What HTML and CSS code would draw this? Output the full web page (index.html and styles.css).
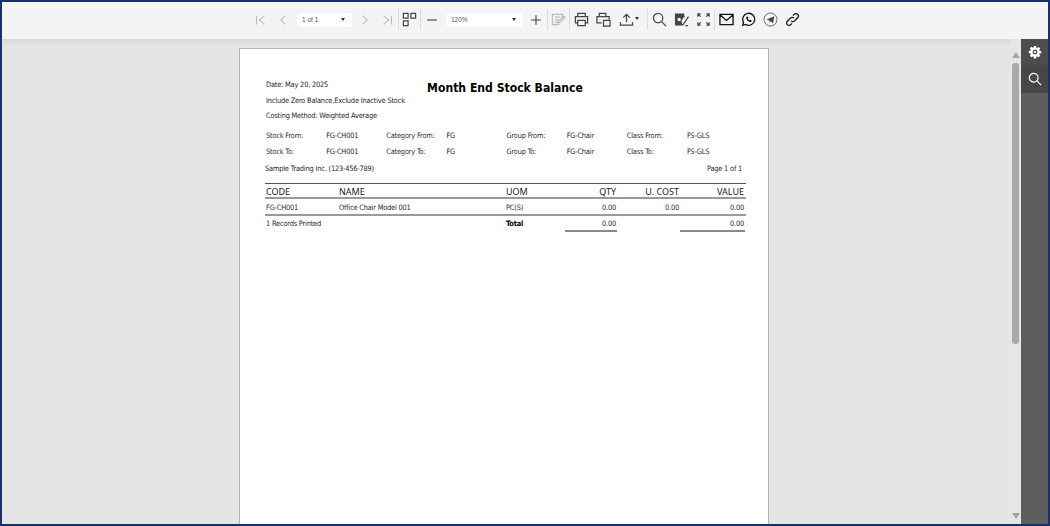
FILE: index.html
```html
<!DOCTYPE html>
<html lang="en">
<head>
<meta charset="utf-8">
<title>Month End Stock Balance</title>
<link rel="stylesheet" href="styles.css">
</head>
<body>
<div class="app">
  <header class="toolbar">
    <div class="group group-nav">
      <button class="btn off"><svg viewBox="0 0 16 16"><path d="M3 3v10M12 3L6 8l6 5"/></svg></button>
      <button class="btn off"><svg viewBox="0 0 16 16"><path d="M10.500 3L5.500 8l5 5"/></svg></button>
      <div class="select select-page"><span>1 of 1</span><i class="caret"></i></div>
      <button class="btn off"><svg viewBox="0 0 16 16"><path d="M5.500 3l5 5-5 5"/></svg></button>
      <button class="btn off"><svg viewBox="0 0 16 16"><path d="M13 3v10M4 3l6 5-6 5"/></svg></button>
    </div>
    <div class="group">
      <button class="btn narrow"><svg viewBox="0 0 16 16" class="big"><path d="M1.500 1.500h5v5h-5zM9.500 1.500h5v5h-5zM1.500 9.500h5v5h-5z"/></svg></button>
    </div>
    <div class="group group-zoom">
      <button class="btn"><svg viewBox="0 0 16 16"><path d="M2.500 8h11"/></svg></button>
      <div class="select select-zoom"><span>120%</span><i class="caret"></i></div>
      <button class="btn"><svg viewBox="0 0 16 16"><path d="M2.500 8h11M8 2.500v11"/></svg></button>
    </div>
    <div class="group">
      <button class="btn narrow off"><svg viewBox="0 0 16 16" class="big"><path d="M12 5V2.500H1.500v11H9M4 5.500h6M4 8.500h4M4 11h3M15 5.500L9.500 11l-2 1 .8-2.200L13.800 4.300z"/></svg></button>
    </div>
    <div class="group">
      <button class="btn"><svg viewBox="0 0 16 16" class="big"><path d="M4 5V1.500h8V5M4 11.500H1.500V5h13v6.500H12M4 9h8v5.500H4z"/></svg></button>
      <button class="btn"><svg viewBox="0 0 16 16" class="big"><path d="M3.500 5V1.500h7V5M6 11.500H1V5h13v3M8 9h7v6H8z"/></svg></button>
      <button class="btn wide"><svg viewBox="0 0 16 16" class="big"><path d="M8 11V2.500M4.500 6L8 2.500 11.500 6M1.500 11v3h13v-3"/></svg><i class="caret small"></i></button>
    </div>
    <div class="group">
      <button class="btn"><svg viewBox="0 0 16 16" class="big"><circle cx="6.500" cy="6.500" r="5"/><path d="M10.200 10.200L15 15"/></svg></button>
      <button class="btn"><svg viewBox="0 0 16 16" class="big"><path class="fill" d="M1 1.500h10v3l-3 5 1 5H1z"/><circle class="punch" cx="5.500" cy="8" r="1.800"/><path d="M15.500 5L10 13l-1.500 1"/><path d="M11 4.500v1M12 14.500h3"/></svg></button>
      <button class="btn"><svg viewBox="0 0 16 16" class="big"><path d="M2 5V2h3M2 2l3 3M11 2h3v3M14 2l-3 3M2 11v3h3M2 14l3-3M14 11v3h-3M14 14l-3-3"/></svg></button>
    </div>
    <div class="group last">
      <button class="btn"><svg viewBox="0 0 16 16" class="big black"><path d="M1 2.500h14v11H1zM1 3l7 6 7-6"/></svg></button>
      <button class="btn"><svg viewBox="0 0 16 16" class="big black"><path d="M1.800 14.200l.9-3.200A6.400 6.400 0 1 1 5 13.300z"/><path class="thick" d="M5.600 5.200c-.5 2.800 2.600 5.800 5.200 5.300l.6-1.500-1.700-.8-.7.700c-.8-.3-1.500-1-1.800-1.800l.7-.7-.8-1.700z"/></svg></button>
      <button class="btn"><svg viewBox="0 0 16 16" class="big thin"><circle cx="8" cy="8" r="7"/><path class="fill" d="M3.800 8L12 4.500 10.800 12 8.300 9.800 7 11.200 6.800 9z"/></svg></button>
      <button class="btn"><svg viewBox="0 0 16 16" class="big black"><path d="M6.500 9.500a2.600 2.600 0 0 0 3.700 0l3.300-3.300a2.600 2.600 0 0 0-3.700-3.700L8.500 3.800M9.500 6.500a2.600 2.600 0 0 0-3.700 0L2.500 9.800a2.600 2.600 0 0 0 3.700 3.700l1.300-1.300"/></svg></button>
    </div>
  </header>

  <div class="workspace">
    <main class="viewer">
      <article class="page">
        <section class="head">
          <div class="meta">
            <div class="line">Date: May 20, 2025</div>
            <div class="line">Include Zero Balance,Exclude Inactive Stock</div>
            <div class="line">Costing Method: Weighted Average</div>
          </div>
          <h1 class="title">Month End Stock Balance</h1>
        </section>

        <section class="filters">
          <span>Stock From:</span><b>FG-CH001</b><span>Category From:</span><b>FG</b><span>Group From:</span><b>FG-Chair</b><span>Class From:</span><b>FS-GLS</b>
          <span>Stock To:</span><b>FG-CH001</b><span>Category To:</span><b>FG</b><span>Group To:</span><b>FG-Chair</b><span>Class To:</span><b>FS-GLS</b>
        </section>

        <div class="company">
          <span>Sample Trading Inc. (123-456-789)</span>
          <span>Page 1 of 1</span>
        </div>

        <section class="table">
          <div class="row row-head">
            <span>CODE</span><span>NAME</span><span>UOM</span><span class="num">QTY</span><span class="num">U. COST</span><span class="num">VALUE</span>
          </div>
          <div class="row row-body">
            <span class="code">FG-CH001</span><span>Office Chair Model 001</span><span class="code">PC(S)</span><span class="num blue">0.00</span><span class="num blue">0.00</span><span class="num blue">0.00</span>
          </div>
          <div class="row row-total">
            <span class="span2">1 Records Printed</span><strong>Total</strong><span class="num sum">0.00</span><span></span><span class="num sum">0.00</span>
          </div>
        </section>
      </article>
    </main>

    <div class="scrollbar">
      <i class="arrow up"></i>
      <div class="track"><div class="thumb"></div></div>
      <i class="arrow down"></i>
    </div>

    <aside class="sidebar">
      <button class="side-btn side-gear">
        <svg viewBox="0 0 16 16"><path class="gear" d="M6.800 1h2.400l.3 1.900 1.100.5 1.600-1.100 1.700 1.700-1.100 1.600.5 1.100 1.900.3v2.400l-1.900.3-.5 1.100 1.100 1.600-1.700 1.700-1.600-1.100-1.100.5-.3 1.900H6.800l-.3-1.900-1.100-.5-1.600 1.100-1.700-1.700 1.100-1.600-.5-1.100L.8 9.200V6.800l1.900-.3.500-1.100-1.100-1.600 1.700-1.700 1.600 1.100 1.100-.5z"/><circle class="gear-hole" cx="8" cy="8" r="2.800"/><circle class="gear-dot" cx="8" cy="8" r="1.300"/></svg>
      </button>
      <button class="side-btn side-search">
        <svg viewBox="0 0 16 16"><circle cx="6.500" cy="6.500" r="5"/><path d="M10.200 10.200L15 15"/></svg>
      </button>
    </aside>
  </div>
</div>
</body>
</html>
```
FILE: styles.css
```css
* { box-sizing: border-box; }
html, body { margin: 0; height: 100%; overflow: hidden; }
body { font-family: "DejaVu Sans Condensed", "DejaVu Sans", sans-serif; }

.app {
  height: 526px;
  width: 1050px;
  border: 2px solid #17306f;
  display: flex;
  flex-direction: column;
  background: #e5e5e5;
}

/* toolbar */
.toolbar {
  height: 37px;
  flex: none;
  background: #f4f4f4;
  display: flex;
  align-items: flex-start;
  padding: 7px 0 0 248px;
  position: relative;
  z-index: 1;
}
.group {
  display: flex;
  align-items: center;
  height: 21px;
  border-right: 1px solid #dcdcdc;
}
.group.last { border-right: 0; }
.btn {
  width: 22px;
  height: 21px;
  padding: 0;
  border: 0;
  background: none;
  display: flex;
  align-items: center;
  justify-content: center;
  position: relative;
}
.btn.narrow { width: 21px; }
.btn.wide { width: 33px; justify-content: flex-start; padding-left: 5px; }
.btn svg { width: 14px; height: 14px; fill: none; stroke: #444; stroke-width: 1.3; display: block; }
.btn svg.big { width: 15px; height: 15px; }
.btn svg.black { stroke: #111; stroke-width: 1.4; }
.btn svg.thin { stroke: #555; stroke-width: .9; }
.btn.off svg { stroke: #bdbdbd; }
.btn svg .fill { fill: #444; stroke: none; }
.btn svg .punch { fill: #f4f4f4; stroke: none; }
.btn svg .thick { fill: #111; stroke: none; }

.select {
  height: 14px;
  margin: 0 2px 0 3px;
  background: #fff;
  border-radius: 2px;
  box-shadow: 0 0 1px #d8d8d8;
  display: flex;
  align-items: center;
  justify-content: space-between;
  padding: 0 7px 0 5px;
  font: 6.500px/14px "Liberation Sans", sans-serif;
  color: #555;
}
.select-page { width: 55px; }
.select-zoom { width: 77px; }
.caret {
  width: 0;
  height: 0;
  border-left: 2.500px solid transparent;
  border-right: 2.500px solid transparent;
  border-top: 3px solid #333;
}
.caret.small { position: absolute; left: 21px; top: 8px; }

/* workspace */
.workspace { flex: 1; min-height: 0; display: flex; }
.viewer {
  flex: 1;
  min-width: 0;
  overflow: hidden;
  padding: 9px 0 0 237px;
  background: linear-gradient(#d9d9d9, #e5e5e5 8px);
}
.scrollbar {
  width: 11px;
  flex: none;
  background: #e6e6e6;
  display: flex;
  flex-direction: column;
  align-items: center;
  padding-top: 13px;
  padding-bottom: 5px;
}
.track { flex: 1; width: 100%; display: flex; justify-content: center; padding-top: 5px; }
.thumb { width: 7px; height: 281px; background: #a9a9a9; border-radius: 3px; }
.arrow { width: 0; height: 0; border-left: 4px solid transparent; border-right: 4px solid transparent; }
.arrow.up { border-bottom: 6px solid #a3a3a3; }
.arrow.down { border-top: 6px solid #a3a3a3; }
.sidebar { width: 27px; flex: none; background: #5e5e5e; display: flex; flex-direction: column; }
.side-btn { height: 26px; padding: 0; border: 0; display: flex; align-items: center; justify-content: center; }
.side-gear { background: #4d4d4d; }
.side-search { background: #474747; height: 28px; }
.side-btn svg { width: 14px; height: 14px; fill: none; stroke: #fff; stroke-width: 1.400; }
.side-btn svg .gear { fill: #fff; stroke: none; }
.side-btn svg .gear-hole { fill: #4d4d4d; stroke: none; }
.side-btn svg .gear-dot { fill: #fff; stroke: none; }

/* report page */
.page {
  width: 530px;
  height: 520px;
  background: #fff;
  border: 1px solid #b4b4b4;
  padding: 28px 23px 0 25px;
  font-size: 7.400px;
  letter-spacing: -.2px;
  color: #2b2724;
}
.head { display: grid; }
.meta, .title { grid-area: 1 / 1; }
.line { height: 15.500px; line-height: 15.500px; padding-left: 1px; }
.title {
  margin: 3px 0 0;
  justify-self: center;
  font: bold 12.100px/17px "DejaVu Sans Condensed", "DejaVu Sans", sans-serif;
  letter-spacing: 0;
  color: #000;
}
.filters {
  margin-top: 4px;
  padding-left: 1px;
  display: grid;
  grid-template-columns: repeat(8, 60.140px);
  grid-auto-rows: 16px;
  line-height: 16px;
}
.filters span { color: #3b2a1f; }
.filters b { font-weight: normal; color: #3a1c1c; }
.company {
  margin-top: 1px;
  height: 16px;
  line-height: 16px;
  display: flex;
  justify-content: space-between;
  padding-right: 3px;
}
.table { margin-top: 6px; width: 481px; }
.row {
  display: grid;
  grid-template-columns: 73px 167px 59px 52px 63px 65px;
  padding: 0 1px;
}
.row .num { text-align: right; padding-right: 1px; }
.row-head {
  height: 16px;
  border-top: 1px solid #555;
  border-bottom: 2px solid #9a9a9a;
  font-family: "Noto Sans", sans-serif;
  font-size: 9px;
  letter-spacing: 0;
  line-height: 15px;
  color: #222;
}
.row-body { height: 17px; line-height: 17px; border-bottom: 2px solid #9a9a9a; }
.row-total { height: 17px; line-height: 15px; }
.row-total strong { color: #000; }
.span2 { grid-column: span 2; }
.code { color: #4a1f1f; }
.blue { color: #1e2a62; }
.sum { color: #3a1c1c; }
.row-total .sum {
  height: 16px;
  border-bottom: 2px solid #8a8a8a;
}
```
